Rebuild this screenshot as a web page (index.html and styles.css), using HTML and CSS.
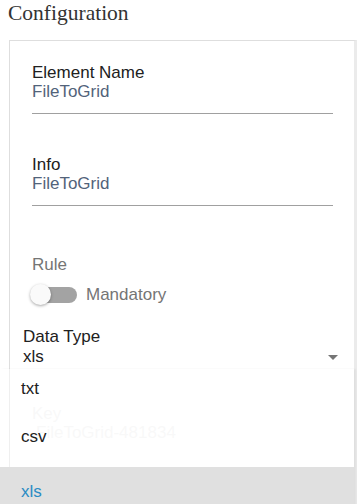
FILE: index.html
```html
<!DOCTYPE html>
<html lang="en">
<head>
<meta charset="utf-8">
<title>Configuration</title>
<link rel="stylesheet" href="styles.css">
</head>
<body>
  <h1 class="title">Configuration</h1>
  <section class="card">
    <div class="field">
      <div class="field__label">Element Name</div>
      <div class="field__value">FileToGrid</div>
    </div>
    <div class="field field--spaced">
      <div class="field__label">Info</div>
      <div class="field__value">FileToGrid</div>
    </div>
    <div class="rule">
      <div class="rule__label">Rule</div>
      <div class="rule__row">
        <span class="toggle"><span class="toggle__track"></span><span class="toggle__thumb"></span></span>
        <span class="rule__text">Mandatory</span>
      </div>
    </div>
    <div class="select">
      <div class="select__label">Data Type</div>
      <div class="select__row">
        <span class="select__value">xls</span>
        <svg class="select__caret" width="10" height="5" viewBox="0 0 10 5"><path d="M0 0h10L5 5z" fill="#757575"/></svg>
      </div>
    </div>
    <div class="ghost">
      <div class="ghost__label">Key</div>
      <div class="ghost__value">FileToGrid-481834</div>
    </div>
  </section>
  <ul class="menu">
    <li class="menu__item">txt</li>
    <li class="menu__item menu__item--second">csv</li>
    <li class="menu__item menu__item--selected">xls</li>
  </ul>
</body>
</html>
```
FILE: styles.css
```css
html, body {
  margin: 0;
  padding: 0;
  background: #fff;
}
body {
  position: relative;
  height: 504px;
  overflow: hidden;
  font-family: "Liberation Sans", Arial, sans-serif;
  font-size: 17px;
  color: #212121;
}
.title {
  margin: 0;
  height: 40px;
  box-sizing: border-box;
  padding: 1px 0 0 8px;
  font-family: "Liberation Serif", "Times New Roman", serif;
  font-weight: normal;
  font-size: 21.5px;
  line-height: 24px;
  color: #333;
}
.card {
  margin-left: 9px;
  width: 348px;
  box-sizing: border-box;
  border: 1px solid #dedede;
  border-right: 3px solid #ebebeb;
  padding-top: 22px;
  padding-bottom: 200px;
}
.field {
  margin: 0 21px 0 22px;
  padding-bottom: 11px;
  border-bottom: 1px solid #a0a0a0;
}
.field--spaced {
  margin-top: 41px;
}
.field__label {
  line-height: 19px;
  color: #212121;
}
.field__value {
  line-height: 20px;
  color: #52637a;
}
.rule {
  margin: 49px 21px 0 22px;
}
.rule__label {
  line-height: 19px;
  color: #757575;
}
.rule__row {
  margin-top: 9px;
  display: flex;
  align-items: center;
  gap: 9px;
  height: 24px;
}
.toggle {
  position: relative;
  margin-left: -2px;
  width: 47px;
  height: 24px;
  flex: none;
}
.toggle__track {
  position: absolute;
  left: 2px;
  top: 4px;
  width: 45px;
  height: 16px;
  border-radius: 8px;
  background: #a3a3a3;
}
.toggle__thumb {
  position: absolute;
  left: 0;
  top: 1px;
  width: 21px;
  height: 21px;
  border-radius: 50%;
  background: #fafafa;
  box-shadow: 0 1px 3px rgba(0, 0, 0, 0.35);
}
.rule__text {
  line-height: 24px;
  color: #757575;
}
.select {
  margin: 20px 0 0 13px;
  padding-right: 16px;
}
.select__label {
  line-height: 19px;
  color: #212121;
}
.select__row {
  margin-top: 1px;
  display: flex;
  justify-content: space-between;
  align-items: center;
  height: 20px;
}
.select__value {
  line-height: 20px;
}
.select__caret {
  display: block;
}
.ghost {
  margin: 37px 21px 0 22px;
  color: #f1f1f1;
}
.ghost__label {
  line-height: 19px;
}
.ghost__value {
  line-height: 20px;
  padding-left: 4px;
}
.menu {
  position: absolute;
  top: 369px;
  left: 0;
  width: 354px;
  margin: 0;
  padding: 0;
  list-style: none;
  background: rgba(255, 255, 255, 0.5);
  box-shadow: 2px 0 2px rgba(0, 0, 0, 0.05);
}
.menu__item {
  padding: 10px 21px 18px;
  line-height: 20px;
  color: #212121;
}
.menu__item--second {
  padding-bottom: 20px;
}
.menu__item--selected {
  padding-top: 15px;
  padding-bottom: 20px;
  background: #e0e0e0;
  color: #2b8cc4;
}
```
